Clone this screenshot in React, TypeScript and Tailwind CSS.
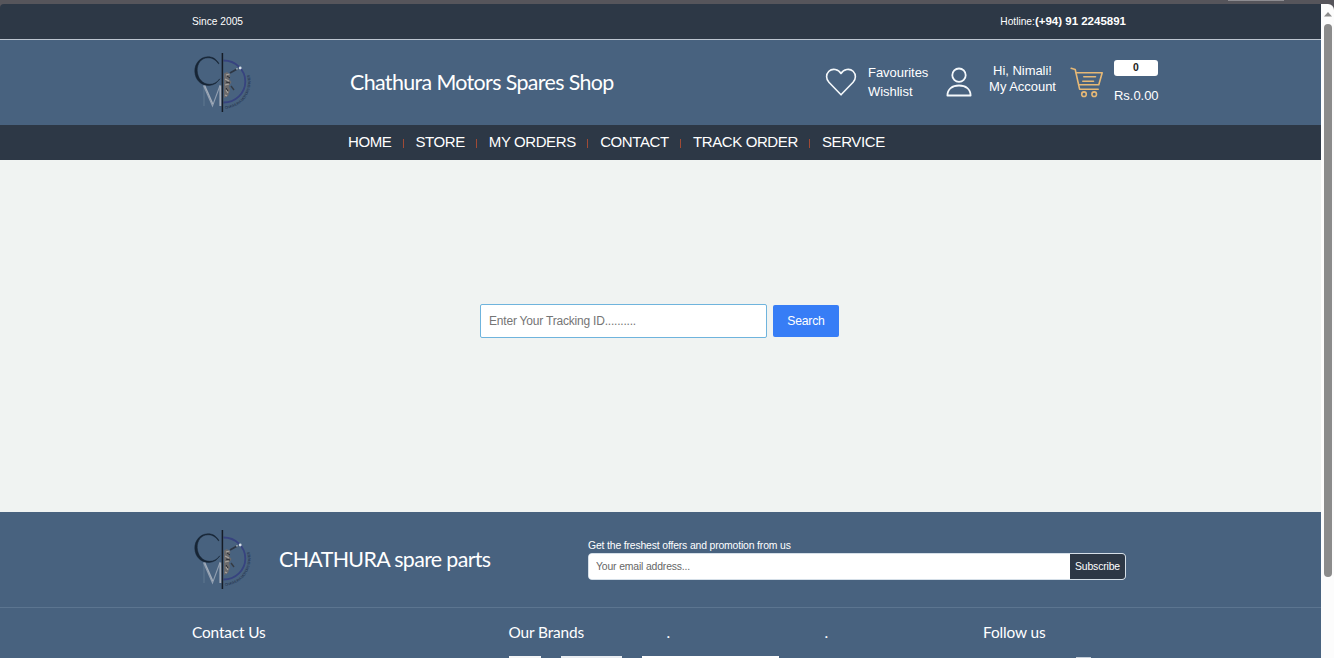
import React from "react";

const sans = "font-['Liberation_Sans',Arial,sans-serif]";
const lato = "font-['Lato',sans-serif]";

function Logo() {
  return (
    <svg className="block h-[64px] w-[64px] shrink-0" viewBox="0 0 64 64" fill="none" aria-label="Chathura Motors">
      <defs>
        <path id="logo-arc" d="M33 58.6 A26.5 26.5 0 0 0 56 21" />
      </defs>
      <path d="M31.5 10.5 A21.8 21 0 0 1 31.5 52.5" stroke="#37437f" strokeWidth="1.8" />
      <path d="M27 13.5 C24 8.5 20 6.6 15.5 6.8 C8 7.2 2.6 13.5 2.8 21.5 C3.2 30 9 35.6 17 35.4 C21.5 35.2 25 33.2 27.8 28.8 C25 32.6 21.6 34.3 17.6 34.3 C10.5 34.2 5.6 28.5 5.2 20.8 C5 13.4 9.2 8 15.8 7.8 C20 7.7 23.5 9.6 26.4 13.8 Z" fill="#172535" stroke="#172535" strokeWidth="0.5" />
      <path d="M12 56V36" stroke="#667d96" strokeWidth="0.8" />
      <path d="M11.5 35.5L20.5 56L28 35.5" stroke="#909eb0" strokeWidth="1.1" />
      <path d="M12.6 35.5L20.8 54" stroke="#a3adba" strokeWidth="1.4" />
      <path d="M28.4 35.5V56" stroke="#a2abb7" strokeWidth="2" />
      <path d="M30.4 3V62" stroke="#151c26" strokeWidth="1.5" />
      <path d="M32 23.5L35 22L38.5 25L37 29L39.5 32L37 36L38 40L36 46L32 48Z" fill="#6b6a6c" />
      <path d="M34 25L37.5 24M33 29L37 31M33 35L37 34M34 40L36 43M33 45L35 46" stroke="#a9a59f" strokeWidth="1.1" />
      <path d="M35 26L38 28M34 32L38 33M34 38L36 41" stroke="#2b2d33" strokeWidth="1" />
      <path d="M38 23L46 18.5" stroke="#2d3745" strokeWidth="1.8" />
      <path d="M39 36L42 40" stroke="#353b43" strokeWidth="1.4" />
      <circle cx="48.2" cy="18" r="1.4" fill="#d7e0e9" />
      <circle cx="45" cy="18.8" r="0.9" fill="#a9b8c8" />
      <text className={sans} fontSize="3.6" fill="#1d2a42">
        <textPath href="#logo-arc" textLength="48">CHATHURA MOTORS SPARES</textPath>
      </text>
    </svg>
  );
}

function Heart() {
  return (
    <svg className="block h-[28px] w-[32px] shrink-0" viewBox="0 0 32 28" fill="none" stroke="#f4f8fb" strokeWidth="1.6" strokeLinejoin="round">
      <path d="M16 5.5C13.4 1 7.2 .1 3.9 3.3C.8 6.4 .9 11 3.9 14.2L16 26.8L28.1 14.2C31.1 11 31.2 6.4 28.1 3.3C24.8 .1 18.6 1 16 5.5Z" />
    </svg>
  );
}

function Person() {
  return (
    <svg className="block h-[30px] w-[26px] shrink-0" viewBox="0 0 26 30" fill="none" stroke="#f4f8fb" strokeWidth="1.8" strokeLinejoin="round">
      <circle cx="13" cy="8.2" r="6.7" />
      <path d="M1.4 28.5C1.4 22.3 6.2 18.5 13 18.5S24.6 22.3 24.6 28.5Z" />
    </svg>
  );
}

function Cart() {
  return (
    <svg className="block h-[31px] w-[34px] shrink-0" viewBox="0 0 34 31" fill="none" stroke="#e6b876" strokeWidth="1.6" strokeLinecap="round" strokeLinejoin="round">
      <path d="M1.2 1.2L5.2 2.5L9.6 22.2H28.2" />
      <path d="M6 5.7H32.2L28.8 17.8H8.7" />
      <path d="M13.8 9.8H25.5M12.8 14.3H23.5" />
      <circle cx="14" cy="27.2" r="2.3" />
      <circle cx="24.2" cy="27.2" r="2.3" />
    </svg>
  );
}

const links = [
  { label: "HOME", width: "w-[43px]" },
  { label: "STORE", width: "w-[49px]" },
  { label: "MY ORDERS", width: "w-[87px]" },
  { label: "CONTACT", width: "w-[68.5px]" },
  { label: "TRACK ORDER", width: "w-[104.5px]" },
  { label: "SERVICE", width: "w-[64px]" },
];

export default function App() {
  return (
    <div className={`flex h-[658px] w-[1334px] flex-col overflow-hidden bg-[#56555b] whitespace-nowrap text-white ${sans}`}>
      <div className="flex h-[4px] shrink-0 justify-end pr-[50px]">
        <div className="h-px w-[56px] bg-[#8d8c91]" />
      </div>
      <div className="flex min-h-0 flex-1">
        <div className="flex w-[1321px] shrink-0 flex-col overflow-hidden rounded-tl-[4px]">
          <div className="flex h-[36px] shrink-0 items-center justify-between border-b border-[#bcc5d0] bg-[#2d3846] pr-[195px] pl-[192px] text-[10.2px]">
            <span>Since 2005</span>
            <span className="flex items-baseline">
              Hotline:<b className="text-[11.5px]">(+94) 91 2245891</b>
            </span>
          </div>

          <header className="flex h-[85px] shrink-0 items-start bg-[#48627f] pl-[192px]">
            <div className="w-[158px] pt-[10px]"><Logo /></div>
            <h1 className={`w-[475px] pt-[28px] text-[21.4px] leading-[29px] tracking-[-0.62px] ${lato}`}>Chathura Motors Spares Shop</h1>
            <div className="w-[43px] pt-[28px]"><Heart /></div>
            <div className="w-[78px] pt-[23px] text-[13px] leading-[19px] tracking-[-0.04px]">
              <div>Favourites</div>
              <div>Wishlist</div>
            </div>
            <div className="w-[43px] pt-[27px]"><Person /></div>
            <div className="w-[67px] pt-[23px] text-center text-[13px] leading-[16px] tracking-[-0.04px]">
              <div>Hi, Nimali!</div>
              <div>My Account</div>
            </div>
            <div className="w-[58px] pt-[27px] pl-[14px]"><Cart /></div>
            <div className="flex flex-col pt-[20px]">
              <span className="flex h-[16px] w-[44px] items-center justify-center rounded-[3px] bg-white text-[10.4px] font-bold text-[#222]">0</span>
              <span className="mt-[11px] text-[13px] leading-[17px] tracking-[-0.04px]">Rs.0.00</span>
            </div>
          </header>

          <nav className="flex h-[35px] shrink-0 items-center bg-[#2d3846] pl-[348px] text-[15px] tracking-[-0.4px]">
            {links.map((link, i) => (
              <React.Fragment key={link.label}>
                {i > 0 && <span className="mt-[2px] flex w-[24.4px] justify-center"><i className="block h-[9px] w-px bg-[#a04a35]" /></span>}
                <a className={link.width}>{link.label}</a>
              </React.Fragment>
            ))}
          </nav>

          <main className="flex h-[352px] shrink-0 items-start bg-[#f0f3f2] pt-[144px] pl-[480px]">
            <input
              className="h-[34px] w-[287px] rounded-[2px] border border-[#6fb4dd] bg-white px-[8px] text-[12px] tracking-[-0.2px] outline-none placeholder:text-[#757575]"
              placeholder="Enter Your Tracking ID.........."
            />
            <button className="mt-px ml-[6px] h-[32px] w-[66px] rounded-[2px] bg-[#377df6] text-[12.2px] tracking-[-0.2px]">Search</button>
          </main>

          <footer className="flex min-h-0 flex-1 flex-col bg-[#48627f]">
            <div className="flex h-[96px] shrink-0 items-start border-b border-[#5c7590] pl-[192px]">
              <div className="w-[87px] pt-[15px]"><Logo /></div>
              <h2 className={`w-[309px] pt-[33px] text-[21.4px] leading-[29px] tracking-[-0.64px] ${lato}`}>CHATHURA spare parts</h2>
              <div className="flex w-[538px] flex-col pt-[27px]">
                <span className="text-[10.4px] leading-[14px] tracking-[-0.15px]">Get the freshest offers and promotion from us</span>
                <form className="flex h-[27px] overflow-hidden rounded-[4px] border border-[#d5dfe8] bg-white">
                  <input className="min-w-0 flex-1 bg-white px-[7px] text-[10.4px] tracking-[-0.15px] outline-none placeholder:text-[#666]" placeholder="Your email address..." />
                  <button type="button" className="w-[55px] bg-[#2d3846] text-[10.4px] tracking-[-0.15px]">Subscribe</button>
                </form>
              </div>
            </div>
            <div className={`flex h-[48px] shrink-0 items-start pt-[13px] pl-[192px] text-[15.4px] leading-[22px] tracking-[-0.13px] ${lato}`}>
              <span className="w-[316.5px]">Contact Us</span>
              <span className="w-[158px]">Our Brands</span>
              <span className="w-[158px]">.</span>
              <span className="w-[158.5px]">.</span>
              <span>Follow us</span>
            </div>
            <div className="flex h-[2px] shrink-0 items-end pl-[509px]">
              <div className="h-[2px] w-[32px] bg-[#f4f5f6]" />
              <div className="ml-[20px] h-[2px] w-[61px] bg-[#e9edf1]" />
              <div className="ml-[20px] h-[2px] w-[137px] bg-white" />
              <div className="ml-[297px] h-px w-[15px] bg-[#c4ced9]" />
            </div>
          </footer>
        </div>

        <div className="flex w-[13px] shrink-0 flex-col items-center rounded-tr-[6px] bg-[#fcfcfc] pl-px">
          <svg className="mt-[8px] block h-[5px] w-[8px]" viewBox="0 0 8 5"><path d="M4 0L8 4.5H0Z" fill="#8b8b8b" /></svg>
          <div className="mt-[7px] h-[553px] w-[8px] rounded-full bg-[#8b8b8b]" />
        </div>
      </div>
    </div>
  );
}
